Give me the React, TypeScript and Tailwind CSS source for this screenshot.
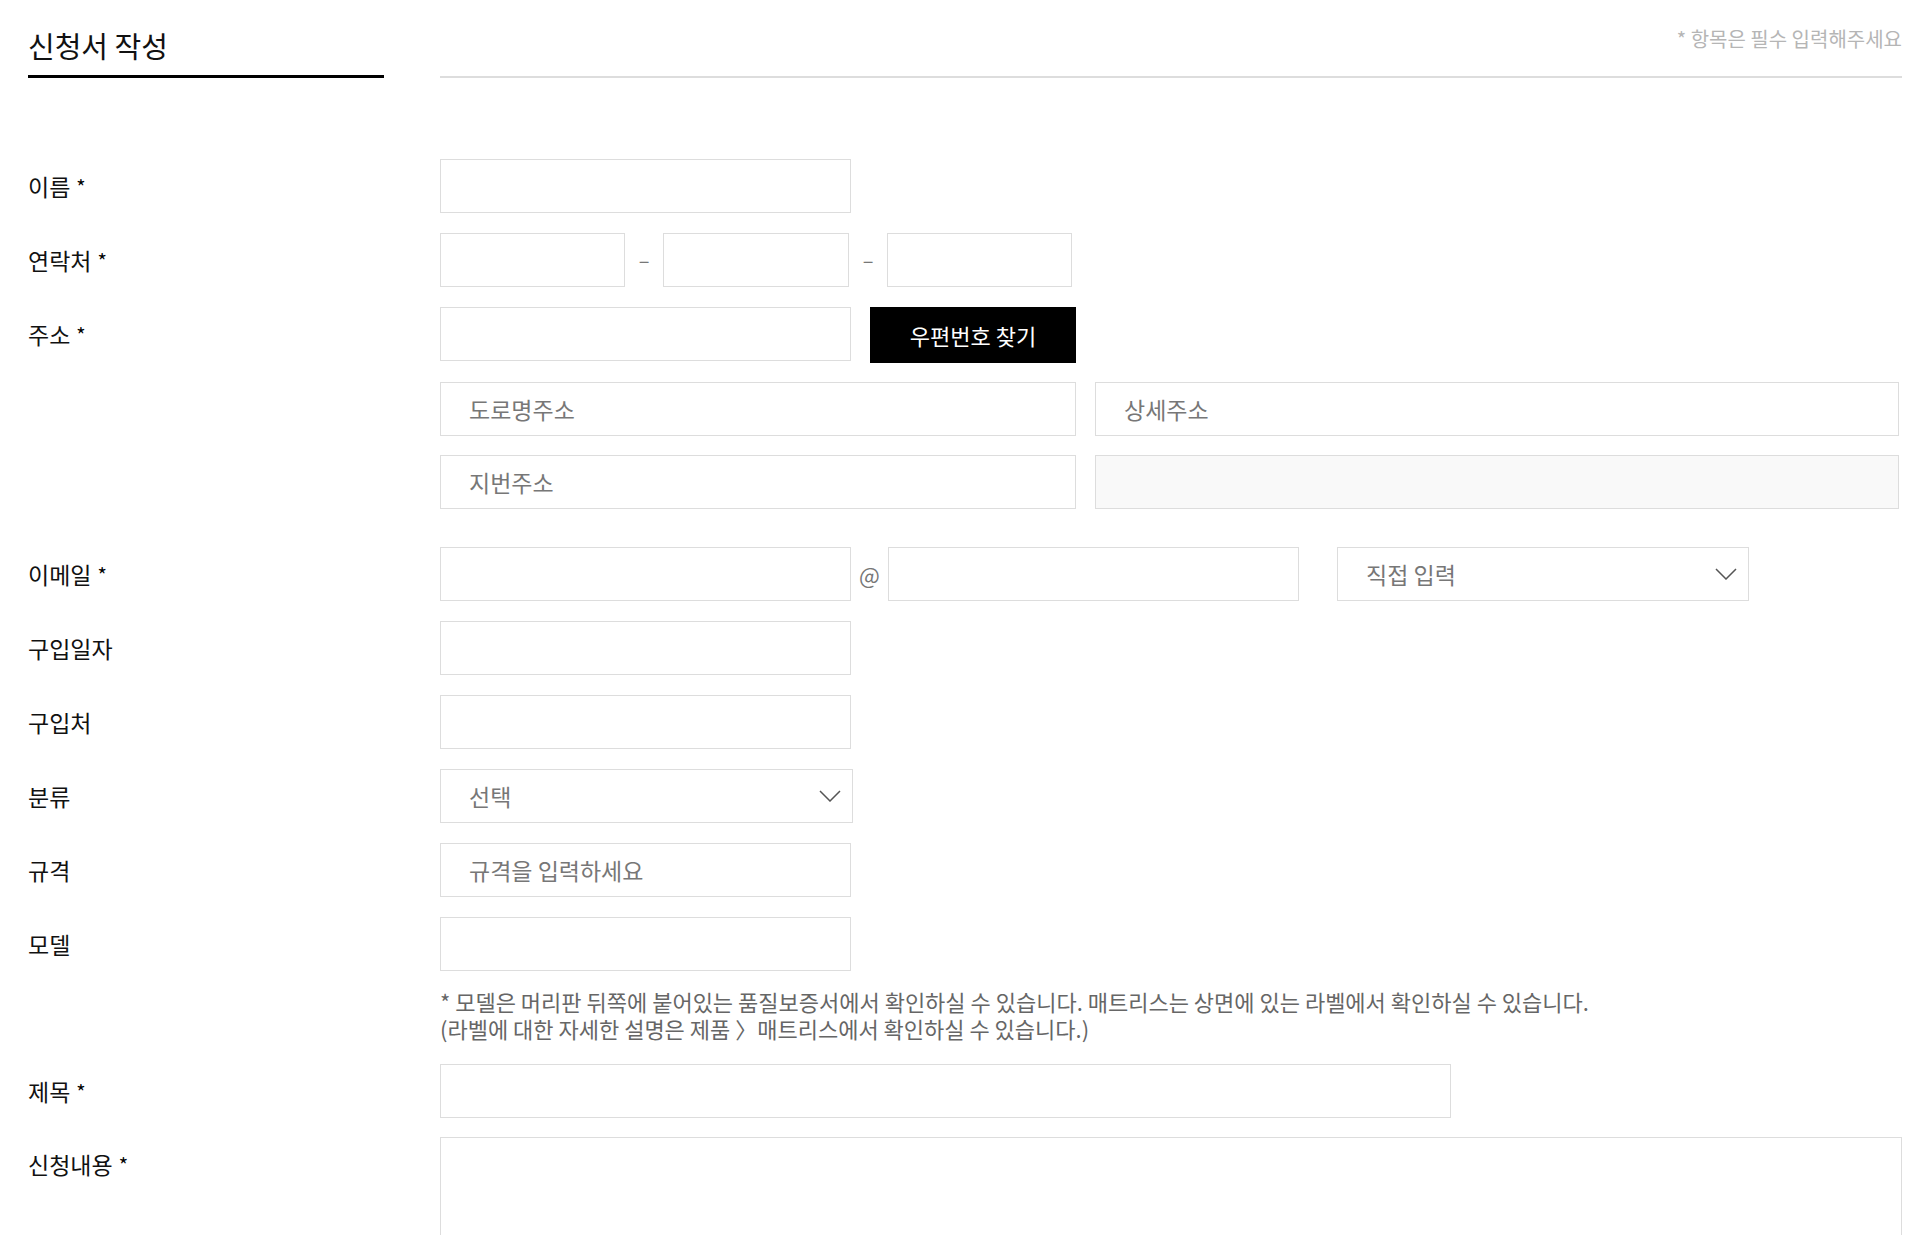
import { ReactNode } from "react";

const inputCls =
  "h-[54px] border border-[#dddddd] bg-white px-[28px] text-[23px] text-[#333] placeholder:text-[#777] outline-none";

function Chevron() {
  return (
    <svg
      width="22"
      height="12"
      viewBox="0 0 22 12"
      fill="none"
      className="pointer-events-none absolute right-[12px] top-1/2 -translate-y-1/2"
    >
      <polyline points="1,1 11,11 21,1" stroke="#555" strokeWidth="1.5" />
    </svg>
  );
}

function Select({ value, className }: { value: string; className: string }) {
  return (
    <div className={`relative ${className}`}>
      <select className="h-[54px] w-full appearance-none border border-[#dddddd] bg-white px-[28px] text-[23px] text-[#777] outline-none">
        <option>{value}</option>
      </select>
      <Chevron />
    </div>
  );
}

function Row({
  label,
  required,
  children,
  className = "",
}: {
  label: string;
  required?: boolean;
  children: ReactNode;
  className?: string;
}) {
  return (
    <div className={`grid grid-cols-[412px_1fr] ${className}`}>
      <div className="flex h-[54px] items-center text-[23px] text-[#111]">
        {label}
        {required && <span className="ml-[6px] mt-[2px] text-[20px] text-black">*</span>}
      </div>
      <div>{children}</div>
    </div>
  );
}

export default function App() {
  return (
    <main className="min-h-screen bg-white pl-[28px] pr-[21px] font-['Noto_Sans_CJK_KR','Noto_Sans',sans-serif]">
      {/* header */}
      <div className="flex items-end gap-[56px]">
        <div className="w-[356px] border-b-[3px] border-black pb-[10px] pt-[25px]">
          <h1 className="text-[29px] leading-[40px] text-[#111]">신청서 작성</h1>
        </div>
        <div className="flex flex-1 flex-col border-b-2 border-[#dddddd]">
          <p className="self-end pb-[24px] pt-[26px] text-[20px] leading-[26px] text-[#b5b5b5]">
            * 항목은 필수 입력해주세요
          </p>
        </div>
      </div>

      <form className="mt-[81px] flex flex-col gap-[20px]">
        <Row label="이름" required>
          <input className={`${inputCls} w-[411px]`} />
        </Row>

        <Row label="연락처" required>
          <div className="flex items-center">
            <input className={`${inputCls} w-[185px]`} />
            <span className="w-[38px] text-center text-[20px] text-[#777]">–</span>
            <input className={`${inputCls} w-[186px]`} />
            <span className="w-[38px] text-center text-[20px] text-[#777]">–</span>
            <input className={`${inputCls} w-[185px]`} />
          </div>
        </Row>

        <Row label="주소" required>
          <div className="flex flex-col gap-[19px]">
            <div className="flex items-start gap-[19px]">
              <input className={`${inputCls} w-[411px]`} />
              <button
                type="button"
                className="h-[56px] w-[206px] bg-black text-[22px] text-white"
              >
                우편번호 찾기
              </button>
            </div>
            <div className="grid grid-cols-[636px_804px] gap-x-[19px] gap-y-[19px]">
              <input className={`${inputCls} w-full`} placeholder="도로명주소" />
              <input className={`${inputCls} w-full`} placeholder="상세주소" />
              <input className={`${inputCls} w-full`} placeholder="지번주소" />
              <div className="h-[54px] border border-[#dddddd] bg-[#f9f9f9]" />
            </div>
          </div>
        </Row>

        <Row label="이메일" required className="mt-[18px]">
          <div className="flex items-center">
            <input className={`${inputCls} w-[411px]`} />
            <span className="w-[37px] text-center text-[22px] text-[#777]">@</span>
            <input className={`${inputCls} w-[411px]`} />
            <Select value="직접 입력" className="ml-[38px] w-[412px]" />
          </div>
        </Row>

        <Row label="구입일자">
          <input className={`${inputCls} w-[411px]`} />
        </Row>

        <Row label="구입처">
          <input className={`${inputCls} w-[411px]`} />
        </Row>

        <Row label="분류">
          <Select value="선택" className="w-[413px]" />
        </Row>

        <Row label="규격">
          <input className={`${inputCls} w-[411px]`} placeholder="규격을 입력하세요" />
        </Row>

        <Row label="모델">
          <input className={`${inputCls} w-[411px]`} />
          <p className="mt-[17px] text-[22px] leading-[27px] text-[#666]">
            * 모델은 머리판 뒤쪽에 붙어있는 품질보증서에서 확인하실 수 있습니다. 매트리스는 상면에 있는 라벨에서
            확인하실 수 있습니다.
            <br />
            (라벨에 대한 자세한 설명은 제품 〉매트리스에서 확인하실 수 있습니다.)
          </p>
        </Row>

        <Row label="제목" required className="mt-[2px]">
          <input className={`${inputCls} w-[1011px]`} />
        </Row>

        <Row label="신청내용" required className="-mt-[1px]">
          <textarea className="h-[200px] w-full resize-none border border-[#dddddd] bg-white px-[28px] py-[14px] text-[23px] outline-none" />
        </Row>
      </form>
    </main>
  );
}
